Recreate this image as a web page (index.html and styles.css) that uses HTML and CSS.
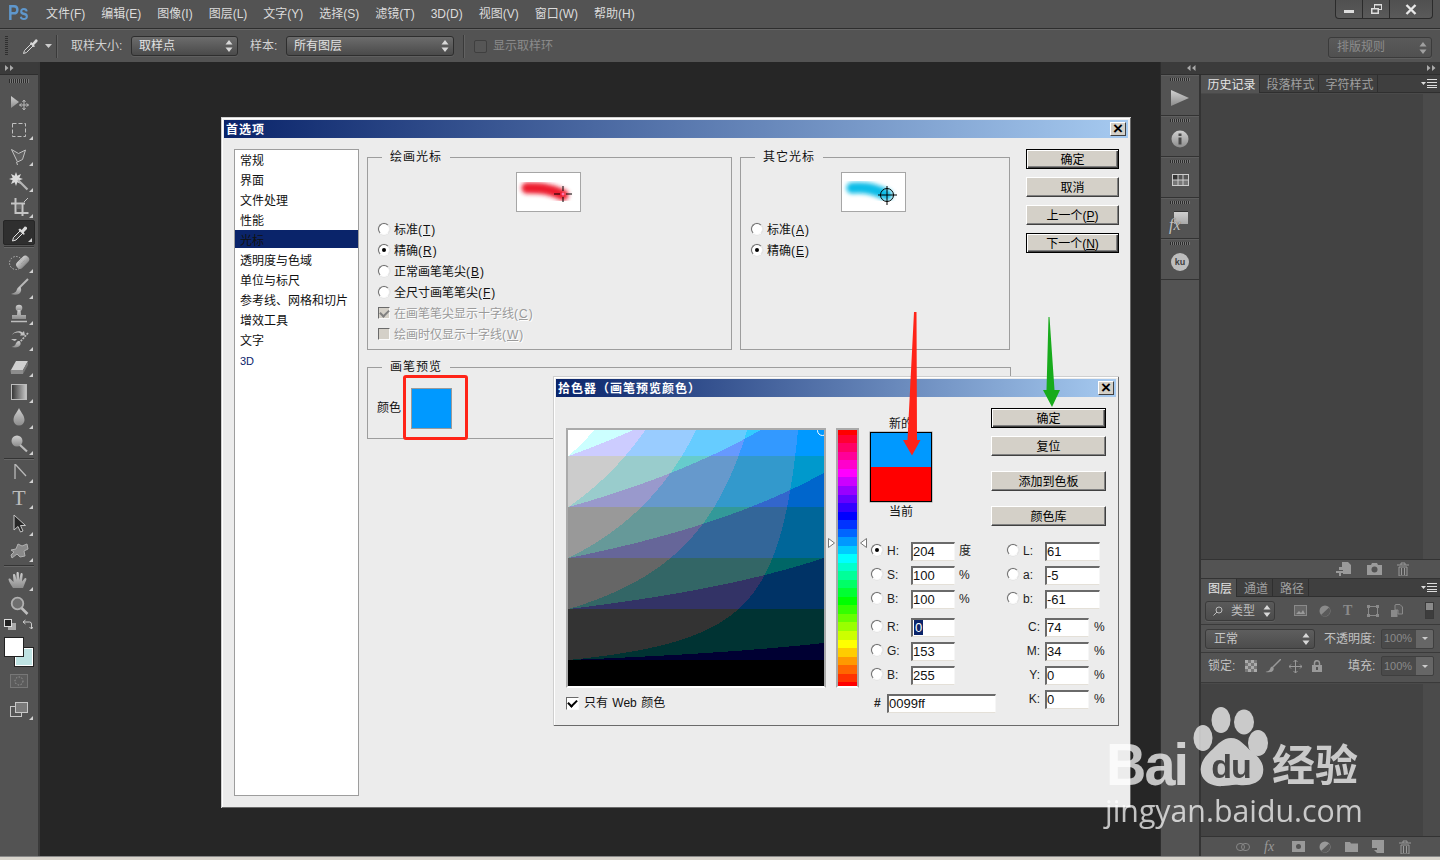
FILE: index.html
```html
<!DOCTYPE html>
<html lang="zh">
<head>
<meta charset="utf-8">
<title>Photoshop 首选项</title>
<link rel="stylesheet" href="styles.css">
</head>
<body>
<svg class="defs" width="0" height="0" aria-hidden="true">
  <defs>
    <linearGradient id="g" x1="0" y1="0" x2="0" y2="1"><stop offset="0" stop-color="#d0d0d0"/><stop offset="1" stop-color="#8c8c8c"/></linearGradient>
    <linearGradient id="gh" x1="0" y1="0" x2="1" y2="0"><stop offset="0" stop-color="#333"/><stop offset="1" stop-color="#c8c8c8"/></linearGradient>
    <filter id="soft" x="-30%" y="-80%" width="160%" height="260%"><feGaussianBlur stdDeviation="2"/></filter>
    <symbol id="updown" viewBox="0 0 8 12"><path d="M4 0l3.500 4.500h-7zM4 12L.5 7.500h7z" fill="currentColor"/></symbol>
    <symbol id="panelmenu" viewBox="0 0 16 9"><path d="M0 3h5L2.500 6z" fill="#ddd"/><path d="M6 .5h10M6 3.500h10M6 6.500h10M6 8.500h10" stroke="#ddd" stroke-width="1"/></symbol>
    <symbol id="trash" viewBox="0 0 14 14"><path d="M1 3h12M5 3V1h4v2M3 5h8v9H3zM5.500 6v7M8.500 6v7" stroke="#9a9a9a" fill="none"/></symbol>
    <symbol id="corner" viewBox="0 0 4 4"><path d="M4 0v4H0z" fill="#d0d0d0"/></symbol>
  </defs>
</svg>

<header class="menubar">
  <span class="ps-logo"><span class="ps-tx">Ps</span></span>
  <nav class="menu">
    <span>文件(F)</span><span>编辑(E)</span><span>图像(I)</span><span>图层(L)</span><span>文字(Y)</span><span>选择(S)</span><span>滤镜(T)</span><span>3D(D)</span><span>视图(V)</span><span>窗口(W)</span><span>帮助(H)</span>
  </nav>
  <div class="winctl">
    <span class="wc wc-min"><svg width="12" height="12" viewBox="0 0 12 12"><rect x="1" y="7" width="10" height="3" fill="#ddd"/></svg></span>
    <span class="wc wc-max"><svg width="13" height="12" viewBox="0 0 13 12"><path d="M4 1h8v6H9v4H1V5h3zM5 2.500V5h4v1h2V2.500zM2.500 6.500v3h5v-3z" fill="#ddd" fill-rule="evenodd"/></svg></span>
    <span class="wc wc-close"><svg width="12" height="11" viewBox="0 0 12 11"><path d="M1.500 1l9 9M10.500 1l-9 9" stroke="#e8e8e8" stroke-width="2.400"/></svg></span>
  </div>
</header>

<section class="optionsbar">
  <span class="grip"></span>
  <svg class="opt-tool" width="18" height="18" viewBox="0 0 18 18"><path d="M1.500 16.500l1-3 7-7 2 2-7 7z" fill="#555" stroke="#d8d8d8"/><path d="M9 5l1.500 1 3-3.500a1.500 1.500 0 012 2L12 8l1 1.500-1.500.5L8 6.500z" fill="#d8d8d8"/></svg>
  <svg class="opt-caret" width="7" height="4" viewBox="0 0 7 4"><path d="M0 0h7L3.500 4z" fill="#ccc"/></svg>
  <span class="vsep sep-a"></span>
  <span class="opt-label lbl-size">取样大小:</span>
  <span class="select sel-size"><span>取样点</span><svg class="ud" width="8" height="12"><use href="#updown"/></svg></span>
  <span class="opt-label lbl-sample">样本:</span>
  <span class="select sel-sample"><span>所有图层</span><svg class="ud" width="8" height="12"><use href="#updown"/></svg></span>
  <span class="vsep sep-b"></span>
  <span class="opt-check"></span>
  <span class="opt-label dim">显示取样环</span>
  <span class="select sel-rule"><span>排版规则</span><svg class="ud" width="8" height="12"><use href="#updown"/></svg></span>
</section>

<div class="workspace">
  <aside class="toolbar">
    <div class="strip"><svg width="9" height="6" viewBox="0 0 9 6"><path d="M0 0l3.500 3L0 6zM5 0l3.500 3L5 6z" fill="#aaa"/></svg></div>
    <span class="dots tool-dots"></span>

    <div class="tool"><svg width="24" height="24" viewBox="0 0 24 24"><path d="M4 5l8 6-8 6z" fill="url(#g)"/><path d="M17 9.500v9M12.500 14h9M15.500 11l1.500-2 1.500 2M15.500 17l1.500 2 1.500-2M14.500 12.500l-2 1.500 2 1.500M19.500 12.500l2 1.500-2 1.500" stroke="#b8b8b8" fill="none"/></svg></div>
    <div class="tool"><svg width="24" height="24" viewBox="0 0 24 24"><rect x="5.500" y="6.500" width="13" height="13" fill="none" stroke="#c0c0c0" stroke-dasharray="4 2"/></svg><svg class="cn" width="4" height="4"><use href="#corner"/></svg></div>
    <div class="tool"><svg width="24" height="24" viewBox="0 0 24 24"><path d="M4.500 6.500l7 4 7-3.500-3 9.500-5 2.500z" fill="#5f5f5f" stroke="#c0c0c0"/><path d="M9.500 19l1 3" stroke="#c0c0c0"/></svg><svg class="cn" width="4" height="4"><use href="#corner"/></svg></div>
    <div class="tool"><svg width="24" height="24" viewBox="0 0 24 24"><path d="M9 3l1.300 3.700L14 5l-1.700 3.700L16 10l-3.700 1.300L14 15l-3.700-1.700L9 17l-1.300-3.700L4 15l1.700-3.700L2 10l3.700-1.300L4 5l3.700 1.700z" fill="#dcdcdc"/><path d="M11 11l9.500 9.500" stroke="#b5b5b5" stroke-width="2.200"/></svg><svg class="cn" width="4" height="4"><use href="#corner"/></svg></div>
    <div class="tool"><svg width="24" height="24" viewBox="0 0 24 24"><path d="M4 8.500h14M8.500 3v15h13M15.500 8v13" stroke="#c4c4c4" stroke-width="2" fill="none"/><rect x="10" y="10" width="4" height="4" fill="#6a6a6a"/><path d="M17 7l4-4" stroke="#c4c4c4"/></svg><svg class="cn" width="4" height="4"><use href="#corner"/></svg></div>
    <div class="tool tool-on"><svg width="24" height="24" viewBox="0 0 24 24"><path d="M5.500 20l1-3.500 7.500-7.500 2.500 2.500-7.500 7.500z" fill="#3c3c3c" stroke="#e2e2e2"/><path d="M13 7.500l1.700 1.500 3-3.500a2 2 0 012.300 2.500L16.500 11.500 18 13l-1.500.7-5.200-5z" fill="#dcdcdc"/></svg><svg class="cn" width="4" height="4"><use href="#corner"/></svg></div>
    <div class="tb-sep wide"></div>
    <div class="tool"><svg width="24" height="24" viewBox="0 0 24 24"><circle cx="9" cy="13" r="6.500" fill="none" stroke="#b5b5b5" stroke-dasharray="1.500 1.500"/><rect x="8" y="8.500" width="15" height="7.500" rx="3.500" transform="rotate(-45 15.500 12)" fill="url(#g)"/><path d="M13 11l.1.1M15 13l.1.1M17 11l.1.1M15 9l.1.1" stroke="#555" stroke-width="1.500"/></svg><svg class="cn" width="4" height="4"><use href="#corner"/></svg></div>
    <div class="tool"><svg width="24" height="24" viewBox="0 0 24 24"><path d="M21 3l-9 9" stroke="#b8b8b8" stroke-width="2"/><path d="M13 11c-3 0-3 3-4 4.500-1 1.300-3 2-5 2.500 4 1.500 9 1 10-3 .5-1.500 0-3-1-4z" fill="url(#g)"/></svg><svg class="cn" width="4" height="4"><use href="#corner"/></svg></div>
    <div class="tool"><svg width="24" height="24" viewBox="0 0 24 24"><circle cx="12" cy="6" r="3.300" fill="url(#g)"/><path d="M10.500 8h3l.5 5h5v4H5v-4h5z" fill="url(#g)"/><path d="M4 19.500h16" stroke="#bdbdbd" stroke-width="1.500"/></svg><svg class="cn" width="4" height="4"><use href="#corner"/></svg></div>
    <div class="tool"><svg width="24" height="24" viewBox="0 0 24 24"><path d="M21 5l-8 9" stroke="#bbb" stroke-width="1.800" stroke-dasharray="2 1"/><path d="M12 13c-2 0-3 2-3.500 3.500-.5 1-2 2-4 2.500 4 1 8 .5 9-2.500.5-1.500-.5-3.500-1.500-3.500z" fill="url(#g)"/><path d="M5 7c3-3 7-3 9-1l-1 1.500 5 0-1-4.500-1.500 1.500C13 2.500 7 3 5 7zM4 11h6l-2 2-1.500-.5z" fill="#c0c0c0"/></svg><svg class="cn" width="4" height="4"><use href="#corner"/></svg></div>
    <div class="tool"><svg width="24" height="24" viewBox="0 0 24 24"><path d="M4 16l5-9h12l-5 9z" fill="#d0d0d0"/><path d="M3.500 16H16v4H4z" fill="#8c8c8c"/><path d="M16 16l5-9v4l-5 9z" fill="#777"/></svg><svg class="cn" width="4" height="4"><use href="#corner"/></svg></div>
    <div class="tool"><svg width="24" height="24" viewBox="0 0 24 24"><rect x="4.500" y="4.500" width="15" height="15" fill="url(#gh)" stroke="#bcbcbc"/></svg><svg class="cn" width="4" height="4"><use href="#corner"/></svg></div>
    <div class="tool"><svg width="24" height="24" viewBox="0 0 24 24"><path d="M12 2c1.500 4 5.500 7 5.500 12a5.500 5.500 0 01-11 0C6.500 9 10.500 6 12 2z" fill="url(#g)"/></svg><svg class="cn" width="4" height="4"><use href="#corner"/></svg></div>
    <div class="tool"><svg width="24" height="24" viewBox="0 0 24 24"><circle cx="10" cy="9" r="5.500" fill="url(#g)"/><path d="M13 13l7 6.500" stroke="#bbb" stroke-width="2.200"/></svg><svg class="cn" width="4" height="4"><use href="#corner"/></svg></div>
    <div class="tb-sep"></div>
    <div class="tool"><svg width="24" height="24" viewBox="0 0 24 24"><path d="M8 4v15M8.500 4.500L19 16" stroke="#b8b8b8" stroke-width="1.300" fill="none"/></svg><svg class="cn" width="4" height="4"><use href="#corner"/></svg></div>
    <div class="tool"><span class="tool-t">T</span><svg class="cn" width="4" height="4"><use href="#corner"/></svg></div>
    <div class="tool"><svg width="24" height="24" viewBox="0 0 24 24"><path d="M7 3v15l4-3.500 2.500 5.500 2.500-1-2.500-5.500h5z" fill="#262626" stroke="#c4c4c4"/></svg><svg class="cn" width="4" height="4"><use href="#corner"/></svg></div>
    <div class="tool"><svg width="24" height="24" viewBox="0 0 24 24"><path d="M4 11l5-1 2-5 4 2 5-2 1 5-4 2 1 5-5 1-3-3-5 4-1-3 3-3z" fill="#8a8a8a" stroke="#b0b0b0"/></svg><svg class="cn" width="4" height="4"><use href="#corner"/></svg></div>
    <div class="tb-sep wide"></div>
    <div class="tool"><svg width="24" height="24" viewBox="0 0 24 24"><path d="M6 20c-2-3-4-6-4.500-8.500 0-1 1.500-1.500 2.500 0L6.500 14 6 7c0-1.500 2-1.500 2.300 0L9.500 12V5c0-1.500 2.300-1.500 2.300 0l.4 7 1.300-6c.4-1.500 2.300-1 2.200.5l-.7 7 2.500-3c1-1 2.500 0 1.800 1.200L16 20z" fill="url(#g)"/></svg><svg class="cn" width="4" height="4"><use href="#corner"/></svg></div>
    <div class="tool"><svg width="24" height="24" viewBox="0 0 24 24"><circle cx="10.500" cy="9.500" r="5.800" fill="#6f6f6f" stroke="#b0b0b0" stroke-width="1.800"/><path d="M14.500 14l6 6" stroke="#bdbdbd" stroke-width="2.600"/></svg></div>

    <div class="color-mini">
      <svg width="12" height="11" viewBox="0 0 12 11"><rect x="4" y="4" width="8" height="7" fill="#aaa"/><rect x=".5" y=".5" width="7" height="7" fill="#222" stroke="#ddd"/></svg>
      <svg width="11" height="11" viewBox="0 0 11 11"><path d="M1 3h6.500a2 2 0 012 2v5M1 3l2.500-2M1 3l2.500 2M9.500 10l-2-2M9.500 10l1.500-2" fill="none" stroke="#ccc"/></svg>
    </div>
    <div class="swatches"><span class="sw-bg"></span><span class="sw-fg"></span></div>
    <div class="small-tool qm"><svg width="18" height="14" viewBox="0 0 18 14"><rect x=".5" y=".5" width="17" height="13" fill="#5c5c5c" stroke="#777"/><circle cx="9" cy="7" r="4" fill="none" stroke="#9a9a9a" stroke-dasharray="1.500 1.500"/></svg></div>
    <div class="small-tool sm"><svg width="18" height="15" viewBox="0 0 18 15"><rect x=".5" y="4.500" width="11" height="10" fill="#555" stroke="#c8c8c8"/><rect x="5.500" y=".5" width="12" height="10" fill="#7a7a7a" stroke="#c8c8c8"/></svg><svg class="cn" width="4" height="4"><use href="#corner"/></svg></div>
  </aside>

  <main class="canvas">
    <section class="dlg prefs">
      <div class="titlebar"><span class="tt">首选项</span><span class="xbtn">×</span></div>
      <div class="prefs-body">
        <ul class="cat-list">
          <li>常规</li><li>界面</li><li>文件处理</li><li>性能</li><li class="sel">光标</li><li>透明度与色域</li><li>单位与标尺</li><li>参考线、网格和切片</li><li>增效工具</li><li>文字</li><li class="blue3d">3D</li>
        </ul>
        <div class="prefs-main">
          <div class="fs-row">
            <div class="fs fs-paint">
              <span class="legend">绘画光标</span>
              <div class="cursor-prev cp-a"><svg width="63" height="38" viewBox="0 0 63 38"><path d="M10 15c12 0 22 0 36 7" fill="none" stroke="#ed1c2e" stroke-width="11" stroke-linecap="round" filter="url(#soft)"/><path d="M37 21h6M49 21h6M46 13v5M46 24v5" stroke="#000" stroke-width="1"/><circle cx="46" cy="21" r="1.500" fill="#f7a"/></svg></div>
              <div class="opts">
                <label class="opt"><i class="radio"></i>标准(<u>T</u>)</label>
                <label class="opt"><i class="radio on"></i>精确(<u>R</u>)</label>
                <label class="opt"><i class="radio"></i>正常画笔笔尖(<u>B</u>)</label>
                <label class="opt"><i class="radio"></i>全尺寸画笔笔尖(<u>F</u>)</label>
                <label class="opt off"><i class="check ck-dis on"></i>在画笔笔尖显示十字线(<u>C</u>)</label>
                <label class="opt off"><i class="check ck-dis"></i>绘画时仅显示十字线(<u>W</u>)</label>
              </div>
            </div>
            <div class="fs fs-other">
              <span class="legend">其它光标</span>
              <div class="cursor-prev cp-b"><svg width="63" height="38" viewBox="0 0 63 38"><path d="M10 15c12-1 20 0 35 7" fill="none" stroke="#10bde8" stroke-width="11" stroke-linecap="round" filter="url(#soft)"/><circle cx="45" cy="22" r="6.500" fill="none" stroke="#000"/><path d="M36 22h19M45 13v19" stroke="#000"/></svg></div>
              <div class="opts">
                <label class="opt"><i class="radio"></i>标准(<u>A</u>)</label>
                <label class="opt"><i class="radio on"></i>精确(<u>E</u>)</label>
              </div>
            </div>
          </div>
          <div class="fs fs-brush">
            <span class="legend">画笔预览</span>
            <span class="color-lbl">颜色</span>
            <span class="color-box"></span>
          </div>
        </div>
        <div class="btn-col">
          <span class="btn def">确定</span>
          <span class="btn">取消</span>
          <span class="btn">上一个(<u>P</u>)</span>
          <span class="btn def">下一个(<u>N</u>)</span>
        </div>
      </div>
    </section>

    <span class="note-box"></span>

    <section class="dlg picker">
      <div class="titlebar"><span class="tt">拾色器（画笔预览颜色）</span><span class="xbtn">×</span></div>
      <div class="picker-body">
        <div class="pick-left">
          <div class="field-box"><canvas id="field" width="256" height="256"></canvas><span class="marker"></span></div>
          <label class="web"><i class="check on"></i>只有 Web 颜色</label>
        </div>
        <div class="hue-box">
          <canvas id="hue" width="19" height="256"></canvas>
          <svg class="hue-arrow ha-l" width="8" height="10" viewBox="0 0 8 10"><path d="M.5.500v9l6-4.500z" fill="#fff" stroke="#777"/></svg>
          <svg class="hue-arrow ha-r" width="8" height="10" viewBox="0 0 8 10"><path d="M7.500.500v9l-6-4.500z" fill="#fff" stroke="#777"/></svg>
        </div>
        <div class="pick-right">
          <div class="pick-top">
            <div class="swatch-col">
              <span class="sw-lbl sw-new">新的</span>
              <div class="swatch"><span class="sw-n"></span><span class="sw-c"></span></div>
              <span class="sw-lbl sw-cur">当前</span>
            </div>
            <div class="pick-btns">
              <span class="btn def">确定</span>
              <span class="btn">复位</span>
              <span class="btn gap">添加到色板</span>
              <span class="btn gap">颜色库</span>
            </div>
          </div>
          <div class="vals">
            <div class="val-col">
              <div class="vrow"><i class="radio on"></i><span>H:</span><span class="inp">204</span><span class="suf">度</span></div>
              <div class="vrow"><i class="radio"></i><span>S:</span><span class="inp">100</span><span class="suf">%</span></div>
              <div class="vrow"><i class="radio"></i><span>B:</span><span class="inp">100</span><span class="suf">%</span></div>
              <div class="vrow grp"><i class="radio"></i><span>R:</span><span class="inp"><b class="selected">0</b></span></div>
              <div class="vrow"><i class="radio"></i><span>G:</span><span class="inp">153</span></div>
              <div class="vrow"><i class="radio"></i><span>B:</span><span class="inp">255</span></div>
              <div class="hexrow"><span class="hash">#</span><span class="inp">0099ff</span></div>
            </div>
            <div class="val-col">
              <div class="vrow lab"><i class="radio"></i><span>L:</span><span class="inp">61</span></div>
              <div class="vrow lab"><i class="radio"></i><span>a:</span><span class="inp">-5</span></div>
              <div class="vrow lab"><i class="radio"></i><span>b:</span><span class="inp">-61</span></div>
              <div class="vrow cmyk grp"><span class="rl">C:</span><span class="inp">74</span><span class="suf">%</span></div>
              <div class="vrow cmyk"><span class="rl">M:</span><span class="inp">34</span><span class="suf">%</span></div>
              <div class="vrow cmyk"><span class="rl">Y:</span><span class="inp">0</span><span class="suf">%</span></div>
              <div class="vrow cmyk"><span class="rl">K:</span><span class="inp">0</span><span class="suf">%</span></div>
            </div>
          </div>
        </div>
      </div>
    </section>

    <svg class="arrows" viewBox="40 62 1120 794" width="1120" height="794">
      <path d="M914 312l2.500 0 .5 128h3.500l-8.500 15.500-9-15.500h4.500z" fill="#ff2418"/>
      <path d="M1048.500 317h1l5 73h5.500l-8 17-9-17h3.500z" fill="#18ab1c"/>
    </svg>
  </main>

  <div class="rightcol">
    <div class="strip strip-r">
      <svg class="arrow-ll" width="9" height="6" viewBox="0 0 9 6"><path d="M3.500 0L0 3l3.500 3zM8.500 0L5 3l3.500 3z" fill="#aaa"/></svg>
      <svg class="arrow-rr" width="9" height="6" viewBox="0 0 9 6"><path d="M0 0l3.500 3L0 6zM5 0l3.500 3L5 6z" fill="#aaa"/></svg>
    </div>
    <div class="dock-row">
      <aside class="dock">
        <div class="dock-item"><span class="dots"></span><svg width="18" height="16" viewBox="0 0 18 16"><path d="M0 0l18 8-18 8z" fill="url(#g)"/></svg></div>
        <div class="dock-item"><span class="dots"></span><svg width="18" height="18" viewBox="0 0 18 18"><circle cx="9" cy="9" r="8.500" fill="url(#g)"/><rect x="7.500" y="7.500" width="3" height="7" fill="#4a4a4a"/><rect x="7.500" y="3.500" width="3" height="2.500" fill="#4a4a4a"/></svg></div>
        <div class="dock-item"><span class="dots"></span><svg width="17" height="12" viewBox="0 0 17 12"><rect width="17" height="12" fill="#ccc"/><path d="M1 1h4.500v4.500H1z" fill="#333"/><path d="M6.500 1h4v4.500h-4zM11.500 1H16v4.500h-4.500z" fill="#555"/><path d="M1 6.500h4.500V11H1zM6.500 6.500h4V11h-4zM11.500 6.500H16V11h-4.500z" fill="#777"/></svg></div>
        <div class="dock-item"><span class="dots"></span><span class="fx-icon"><span class="fx-sq"></span><span class="fx-tx">fx</span></span></div>
        <div class="dock-item"><span class="dots"></span><span class="ku">ku</span></div>
      </aside>
      <div class="panels">
        <section class="panel history">
          <div class="tabs">
            <span class="tab on">历史记录</span><span class="tab">段落样式</span><span class="tab">字符样式</span>
            <svg class="pm" width="16" height="9"><use href="#panelmenu"/></svg>
          </div>
          <div class="plist"><span class="track"></span></div>
          <div class="pbar pbar-h">
            <svg width="16" height="14" viewBox="0 0 16 14"><path d="M6 0h6l3 3v9H7V8H3V5h3z M2 9h5v2H5v3H3v-3H0V9z" fill="#9a9a9a"/></svg>
            <svg width="15" height="12" viewBox="0 0 15 12"><path d="M0 2h4l1-2h5l1 2h4v10H0z" fill="#9a9a9a"/><circle cx="7.500" cy="6.500" r="3" fill="#535353"/></svg>
            <svg width="14" height="14"><use href="#trash"/></svg>
            <span class="resizer"></span>
          </div>
        </section>
        <section class="panel layers">
          <div class="tabs">
            <span class="tab on t-s">图层</span><span class="tab t-s">通道</span><span class="tab t-s">路径</span>
            <svg class="pm" width="16" height="9"><use href="#panelmenu"/></svg>
          </div>
          <div class="lrow lrow-filter">
            <span class="select sel-filter"><svg width="10" height="10" viewBox="0 0 10 10"><circle cx="6" cy="4" r="3" fill="none" stroke="#bbb"/><path d="M4 6L.5 9.500" stroke="#bbb"/></svg><span>类型</span><svg class="ud" width="8" height="12"><use href="#updown"/></svg></span>
            <span class="filter-icons">
              <svg width="13" height="11" viewBox="0 0 13 11"><rect x=".5" y=".5" width="12" height="10" fill="#666" stroke="#8a8a8a"/><path d="M2 9l3-3 2 2 2-3 2 4z" fill="#9a9a9a"/></svg>
              <svg width="12" height="12" viewBox="0 0 12 12"><circle cx="6" cy="6" r="5.500" fill="#8a8a8a"/><path d="M10 2.500A5.500 5.500 0 012 10z" fill="#5a5a5a"/></svg>
              <span class="ftext">T</span>
              <svg width="12" height="12" viewBox="0 0 12 12"><rect x="1.500" y="1.500" width="9" height="9" fill="none" stroke="#8a8a8a"/><path d="M0 0h3v3H0zM9 0h3v3H9zM0 9h3v3H0zM9 9h3v3H9z" fill="#8a8a8a"/></svg>
              <svg width="12" height="13" viewBox="0 0 12 13"><path d="M5 .500h4l2.500 2.500v7H7V6H4V1z" fill="#5a5a5a" stroke="#8a8a8a"/><rect y="6" width="6.500" height="7" fill="#8a8a8a"/></svg>
            </span>
            <span class="toggle"></span>
          </div>
          <div class="lrow lrow-blend">
            <span class="select sel-blend"><span>正常</span><svg class="ud" width="8" height="12"><use href="#updown"/></svg></span>
            <span class="lbl lbl-op">不透明度:</span>
            <span class="pct"><span>100%</span><svg width="6" height="3" viewBox="0 0 6 3"><path d="M0 0h6L3 3z" fill="#ccc"/></svg></span>
          </div>
          <div class="lrow lrow-lock">
            <span class="lbl lbl-lock">锁定:</span>
            <svg class="lk" width="12" height="12" viewBox="0 0 12 12"><rect width="12" height="12" fill="#777"/><path d="M0 0h3v3H0zM6 0h3v3H6zM3 3h3v3H3zM9 3h3v3H9zM0 6h3v3H0zM6 6h3v3H6zM3 9h3v3H3zM9 9h3v3H9z" fill="#aaa"/></svg>
            <svg class="lk" width="16" height="14" viewBox="0 0 16 14"><path d="M16 0L8 8" stroke="#999" stroke-width="1.500"/><path d="M7.500 7.500c-2 0-2 2-3 3.500-1 1-2.500 1.500-4 2 3 .5 7 .5 8-2 .5-1.500 0-3-1-3.500z" fill="#999"/></svg>
            <svg class="lk lk-wide" width="13" height="13" viewBox="0 0 13 13"><path d="M6.500 0v13M0 6.500h13M4.500 2l2-2 2 2M4.500 11l2 2 2-2M2 4.500l-2 2 2 2M11 4.500l2 2-2 2" fill="none" stroke="#999"/></svg>
            <svg class="lk" width="10" height="12" viewBox="0 0 10 12"><path d="M2.500 5V3.200a2.500 2.500 0 015 0V5" fill="none" stroke="#999" stroke-width="1.500"/><rect y="5" width="10" height="7" fill="#999"/><rect x="4" y="7" width="2" height="3" fill="#535353"/></svg>
            <span class="lbl lbl-fill">填充:</span>
            <span class="pct"><span>100%</span><svg width="6" height="3" viewBox="0 0 6 3"><path d="M0 0h6L3 3z" fill="#ccc"/></svg></span>
          </div>
          <div class="plist plist-l"><span class="track"></span></div>
          <div class="pbar pbar-l">
            <svg width="14" height="8" viewBox="0 0 14 8"><rect x=".5" y=".5" width="8" height="7" rx="3.500" fill="none" stroke="#888"/><rect x="5.500" y=".5" width="8" height="7" rx="3.500" fill="none" stroke="#888"/></svg>
            <span class="fx-small">fx</span>
            <svg width="13" height="11" viewBox="0 0 13 11"><rect width="13" height="11" fill="#999"/><circle cx="6.500" cy="5.500" r="2.500" fill="#535353"/></svg>
            <svg width="12" height="12" viewBox="0 0 12 12"><circle cx="6" cy="6" r="5.500" fill="#999"/><path d="M10 2.500A5.500 5.500 0 012 10z" fill="#5a5a5a"/></svg>
            <svg width="13" height="11" viewBox="0 0 13 11"><path d="M0 1h5l1 1.500h7V11H0z" fill="#999"/></svg>
            <svg width="12" height="13" viewBox="0 0 12 13"><path d="M0 0h12v13H5v-5H0z" fill="#999"/><path d="M2 10l3 3v-3z" fill="#999"/></svg>
            <svg width="14" height="14"><use href="#trash"/></svg>
          </div>
        </section>
      </div>
    </div>
  </div>
</div>
<footer class="foot"></footer>

<div class="watermark">
  <span class="wm-bai">Bai</span>
  <svg class="wm-paw" width="76" height="84" viewBox="0 0 76 84">
    <ellipse cx="28" cy="13" rx="9.500" ry="13" fill="#fff"/>
    <ellipse cx="51" cy="15" rx="10" ry="12.500" fill="#fff"/>
    <ellipse cx="10" cy="31" rx="9.500" ry="13" fill="#fff"/>
    <ellipse cx="65" cy="36" rx="10" ry="13" fill="#fff"/>
    <path d="M38 31c-8 0-13 6-18 11-7 6-14 14-12 24 2 10 13 14 22 13 5 0 10-2 16-1 9 1 22-1 24-12 2-10-5-17-12-22-6-5-11-13-20-13z" fill="#fff"/>
    <text x="38" y="71" class="wm-du">du</text>
  </svg>
  <span class="wm-jy">经验</span>
  <span class="wm-url">jingyan.baidu.com</span>
</div>
<script src="picker.js"></script>
</body>
</html>
```

FILE: styles.css
```css
* { box-sizing: border-box; }
html, body { margin: 0; height: 100%; }
body {
  width: 1440px; height: 860px; overflow: hidden; position: relative;
  display: flex; flex-direction: column; white-space: nowrap;
  background: #535353; color: #d6d6d6;
  font: 12px/1.2 "Liberation Sans", "Noto Sans CJK SC", sans-serif;
}
.defs { position: absolute; }
svg { display: block; flex: none; }

/* Menu bar */
.menubar {
  height: 29px; flex: none; display: flex; align-items: flex-start;
  background: #535353; border-bottom: 1px solid #2e2e2e; position: relative;
}
.ps-logo { width: 46px; padding: 1px 0 0 8px; font: bold 22px/24px "Liberation Sans", sans-serif; color: #5f97cc; flex: none; }
.ps-tx { display: inline-block; transform: scaleX(.76); transform-origin: 0 50%; }
.menu { display: flex; gap: 16px; line-height: 28px; color: #dcdcdc; }
.winctl {
  margin-left: auto; margin-right: 7px; width: 98px; height: 19px; display: flex;
  border: 1px solid #2b2b2b; border-top: 0; border-radius: 0 0 4px 4px;
  background: linear-gradient(#505050, #5a5a5a);
}
.wc { display: flex; align-items: center; justify-content: center; border-right: 1px solid #2b2b2b; }
.wc-min { width: 27px; } .wc-max { width: 27px; } .wc-close { flex: 1; border-right: 0; }

/* Options bar */
.optionsbar {
  height: 33px; flex: none; display: flex; align-items: center;
  background: #535353; border-top: 1px solid #666; position: relative;
}
.grip {
  width: 3px; height: 20px; margin-left: 5px;
  background: repeating-linear-gradient(#2f2f2f 0 1px, transparent 1px 2px);
}
.opt-tool { margin-left: 14px; }
.opt-caret { margin-left: 5px; }
.vsep { width: 1px; height: 23px; background: #3a3a3a; box-shadow: 1px 0 #626262; }
.sep-a { margin-left: 4px; }
.opt-label { color: #d2d2d2; }
.lbl-size { margin-left: 14px; width: 60px; }
.lbl-sample { margin-left: 12px; width: 36px; }
.select {
  display: flex; align-items: center; height: 20px; padding: 0 4px 0 7px;
  border: 1px solid #2e2e2e; border-radius: 3px; color: #e2e2e2;
  background: linear-gradient(#6c6c6c, #4a4a4a); box-shadow: 0 1px #5f5f5f;
}
.select .ud { margin-left: auto; color: #d8d8d8; }
.sel-size { width: 107px; }
.sel-sample { width: 168px; }
.sep-b { margin-left: 9px; }
.opt-check {
  width: 13px; height: 13px; margin: 0 6px 0 10px; border: 1px solid #3f3f3f;
  border-radius: 2px; background: #565656;
}
.dim { color: #8b8b8b; }
.sel-rule {
  position: absolute; left: 1328px; top: 7px; width: 104px; height: 21px;
  color: #8c8c8c; background: linear-gradient(#5a5a5a, #505050); border-color: #3b3b3b;
  padding-left: 8px;
}
.sel-rule .ud { color: #a0a0a0; }

/* Workspace */
.workspace { flex: 1; display: flex; min-height: 0; }
.strip {
  height: 13px; flex: none; background: #3b3b3b; border-bottom: 1px solid #2e2e2e;
  display: flex; align-items: center;
}
.dots {
  display: block; height: 4px; width: 20px; flex: none;
  background: repeating-linear-gradient(90deg, #2c2c2c 0 1px, #777 1px 2px);
}

/* Toolbar */
.toolbar {
  width: 40px; flex: none; display: flex; flex-direction: column; align-items: stretch;
  background: #535353; border-right: 2px solid #3a3a3a;
}
.toolbar > .strip { padding-left: 5px; }
.tool-dots { margin: 4px 0 7px 9px; }
.tool { height: 26.100px; flex: none; position: relative; display: flex; align-items: center; justify-content: center; }
.tool .cn { position: absolute; right: 5px; bottom: 2px; }
.tool-on { background: #2f2f2f; border: 1px solid #262626; border-radius: 2px; margin: 0 3px; height: 25px; }
.tool-on .cn { right: 2px; bottom: 2px; }
.tb-sep { height: 1px; margin: 1px 4px 0; background: #343434; box-shadow: 0 1px #666; flex: none; }
.tb-sep.wide { margin-bottom: 1px; }
.tool-t { font: 22px/1 "Liberation Serif", serif; color: #bcbcbc; }
.color-mini { height: 14px; display: flex; justify-content: space-between; padding: 0 5px 0 4px; margin-top: 0; flex: none; }
.swatches { height: 32px; margin: 4px 0 0 4px; position: relative; flex: none; }
.sw-fg, .sw-bg { position: absolute; width: 20px; height: 20px; border: 1px solid #222; }
.sw-fg { left: 0; top: 0; background: #fff; }
.sw-bg { left: 10px; top: 10px; background: #bfe3e3; box-shadow: inset 0 0 0 1px #fff; }
.small-tool { position: relative; display: flex; justify-content: center; flex: none; }
.qm { margin: 5px 0 11px; }
.sm { padding-top: 3px; height: 24px; }
.small-tool .cn { position: absolute; right: 5px; bottom: 3px; }

/* Canvas */
.canvas { flex: 1; position: relative; background: #262626; min-width: 0; }

/* Dialogs */
.dlg {
  position: absolute; display: flex; flex-direction: column; background: #ececec;
  color: #111; border: 3px solid #ececec;
}
.dlg::after {
  content: ""; position: absolute; inset: -3px; pointer-events: none;
  box-shadow: inset 1px 1px #cfcfcf, inset -1px -1px #6a6a6a, inset 2px 2px #fff;
}
.prefs { left: 181px; top: 55px; width: 910px; height: 691px; }
.picker { left: 513px; top: 314px; width: 566px; height: 350px; }
.titlebar {
  height: 18px; flex: none; display: flex; align-items: center; justify-content: space-between;
  padding: 0 2px; font-weight: bold; color: #fff; font-size: 12px;
  background: linear-gradient(90deg, #0a246a, #a6caf0);
}
.tt { padding-top: 2px; letter-spacing: 1px; }
.xbtn {
  width: 16px; height: 14px; display: flex; align-items: center; justify-content: center;
  color: #000; background: #d4d0c8; font: bold 17px/14px "Liberation Sans", sans-serif;
  border: 1px solid; border-color: #fff #404040 #404040 #fff;
}

/* Preferences */
.prefs-body { flex: 1; display: flex; padding: 11px 0 0 10px; min-height: 0; }
.cat-list {
  width: 125px; height: 647px; flex: none; margin: 0; padding: 0; list-style: none;
  background: #fff; border: 1px solid #9d9d9d;
}
.cat-list li { height: 18px; margin-bottom: 2px; padding: 1px 0 0 5px; line-height: 20px; }
.cat-list .sel { background: #0a246a; color: #111; }
.cat-list .blue3d { color: #0a246a; font-size: 11px; }
.prefs-main { width: 644px; margin-left: 8px; padding-top: 8px; flex: none; }
.fs-row { display: flex; gap: 8px; margin-bottom: 17px; }
.fs { border: 1px solid #9d9d9d; position: relative; }
.legend {
  position: absolute; left: 14px; top: -9px; padding: 0 8px; background: #ececec;
  line-height: 16px; letter-spacing: 1px;
}
.fs-paint { width: 365px; height: 193px; }
.fs-other { width: 270px; height: 193px; }
.cursor-prev { width: 65px; height: 40px; margin-top: 14px; margin-bottom: 7px; background: #fff; border: 1px solid #a6a6a6; }
.cp-a { margin-left: 148px; }
.cp-b { margin-left: 100px; }
.opts { padding: 1px 0 0 10px; }
.opt { display: flex; align-items: center; height: 21px; }
.opt u { text-decoration: underline; margin: 0 1px; }
.radio {
  width: 12px; height: 12px; flex: none; border-radius: 50%; margin-right: 4px; margin-top: -3px;
  background: #fff; border: 1px solid; border-color: #6a6a6a #e8e8e8 #fafafa #6a6a6a;
  box-shadow: 0 0 0 .5px #ddd; position: relative; display: block;
}
.radio.on::after {
  content: ""; position: absolute; left: 3px; top: 3px; width: 4px; height: 4px;
  border-radius: 50%; background: #000;
}
.check {
  width: 12px; height: 12px; flex: none; margin-right: 4px; margin-top: -3px; display: block; position: relative;
  background: #fff; border: 1px solid; border-color: #6a6a6a #fafafa #fafafa #6a6a6a;
}
.check.on::after {
  content: ""; position: absolute; left: 1px; top: 0; width: 7px; height: 4px;
  border-left: 2px solid #000; border-bottom: 2px solid #000; transform: rotate(-45deg) translate(-1px, 1px);
}
.ck-dis { background: #d4d0c8; }
.ck-dis.on::after { border-color: #808080; }
.opt.off { color: #9a9a9a; text-shadow: 1px 1px #fff; }
.fs-brush { width: 644px; height: 72px; display: flex; align-items: center; padding: 10px 0 0 9px; }
.color-lbl { width: 34px; }
.color-box { width: 41px; height: 41px; background: #0099ff; border: 1px solid #9a9a9a; }
.btn-col { width: 93px; margin-left: 15px; display: flex; flex-direction: column; gap: 8px; flex: none; }
.btn {
  height: 20px; display: flex; align-items: center; justify-content: center; flex: none; padding-top: 2px;
  background: #d4d0c8; color: #000; border: 1px solid; border-color: #fff #404040 #404040 #fff;
  box-shadow: inset -1px -1px #808080;
}
.btn.def {
  border-color: #000; box-shadow: inset 1px 1px #fff, inset -1px -1px #404040, inset -2px -2px #808080;
}
.note-box {
  position: absolute; left: 363px; top: 313px; width: 65px; height: 65px;
  border: 3px solid #ff2418; border-radius: 3px;
}

/* Picker */
.picker-body { flex: 1; display: flex; padding: 11px 0 0 10px; min-height: 0; }
.pick-left { width: 260px; flex: none; padding-top: 20px; }
.field-box {
  width: 260px; height: 260px; position: relative; overflow: hidden;
  border: 2px solid; border-color: #aaa #aaa #fff #aaa;
}
.field-box canvas, .hue-box canvas { display: block; }
.marker {
  position: absolute; left: 249px; top: -5px; width: 11px; height: 11px;
  border: 1px solid #fff; border-radius: 50%;
}
.web { display: flex; align-items: center; height: 14px; margin-top: 8px; word-spacing: 1px; }
.web .check { margin: 0 5px 0 0; width: 13px; height: 13px; }
.hue-box {
  width: 23px; height: 260px; margin: 20px 0 0 10px; position: relative; flex: none;
  border: 2px solid; border-color: #aaa #aaa #fff #aaa;
}
.hue-arrow { position: absolute; top: 108px; }
.ha-l { left: -10px; }
.ha-r { right: -10px; }
.pick-right { margin-left: 11px; width: 246px; flex: none; }
.pick-top { display: flex; height: 131px; }
.swatch-col { width: 62px; flex: none; }
.sw-lbl { display: block; text-align: center; }
.sw-new { height: 24px; padding-top: 9px; line-height: 14px; }
.sw-cur { padding-top: 1px; line-height: 18px; }
.swatch { height: 70px; border: 1px solid #000; box-shadow: 0 0 0 .5px #999; display: flex; flex-direction: column; }
.sw-n { flex: 1; background: #0099ff; }
.sw-c { height: 34px; background: #f00; }
.pick-btns { width: 115px; margin-left: 59px; display: flex; flex-direction: column; gap: 8px; flex: none; }
.pick-btns .gap { margin-top: 7px; }
.vals { display: flex; padding-left: 1px; }
.val-col { width: 136px; flex: none; }
.vrow { display: grid; grid-template-columns: 16px 24px 44px auto; align-items: center; height: 24px; }
.vrow .radio { margin: -3px 0 0; }
.vrow .suf { margin-left: 4px; }
.vrow > span:not(.inp) { color: #222; }
.grp { margin-top: 4px; }
.inp {
  height: 19px; display: block; padding-left: 0; background: #fff; color: #111;
  font: 13px/16px "Liberation Sans", sans-serif; overflow: hidden;
  border: 1px solid; border-color: #6a6a6a #f6f6f6 #e4e0d8 #6a6a6a;
  border-width: 2px 1px 1px 2px;
}
.lab { grid-template-columns: 16px 22px 55px; }
.cmyk { grid-template-columns: 33px 44px auto; column-gap: 5px; }
.vrow.cmyk .suf { margin-left: 0; }
.rl { text-align: right; }
.selected { background: #0a246a; color: #fff; font-weight: normal; padding: 0 1px; display: inline-block; line-height: 15px; margin-left: 1px; }
.hexrow { display: grid; grid-template-columns: 16px 109px; align-items: center; height: 24px; margin-top: 4px; }
.hash { padding-left: 3px; color: #222; font-weight: bold; }

.arrows { position: absolute; left: 0; top: 0; pointer-events: none; }

/* Right side */
.rightcol { width: 280px; flex: none; display: flex; flex-direction: column; border-left: 1px solid #2e2e2e; }
.strip-r { justify-content: space-between; padding: 0 4px 0 26px; }
.dock-row { flex: 1; display: flex; min-height: 0; }
.dock { width: 40px; flex: none; border-right: 2px solid #333; background: #535353; }
.dock-item {
  height: 41px; display: flex; flex-direction: column; align-items: center;
  padding-top: 3px; border-bottom: 1px solid #333; box-shadow: inset 0 1px #5e5e5e;
}
.dock-item .dots { height: 3px; }
.dock-item > :not(.dots) { margin: auto; }
.fx-icon { width: 22px; height: 24px; position: relative; display: block; }
.fx-sq { position: absolute; left: 5px; top: 2px; width: 14px; height: 13px; background: linear-gradient(#333 0 1px, #cfcfcf 1px, #a8a8a8); }
.fx-tx { position: absolute; left: 0; top: 8px; font: italic 16px/16px "Liberation Serif", serif; color: #c2c2c2; text-shadow: 0 0 1px #444; }
.ku {
  width: 18px; height: 18px; border-radius: 50%; display: flex; align-items: center; justify-content: center;
  background: #bdbdbd; color: #3d3d3d; font: bold 9px/1 "Liberation Sans", sans-serif;
}
.panels { flex: 1; display: flex; flex-direction: column; min-width: 0; }
.panel { display: flex; flex-direction: column; }
.history { height: 504px; }
.layers { flex: 1; min-height: 0; }
.tabs {
  height: 18px; flex: none; display: flex; background: #3f3f3f; border-bottom: 1px solid #2f2f2f;
  position: relative;
}
.tab {
  width: 59px; display: flex; align-items: center; justify-content: center; padding: 2px 0 0 3px;
  color: #a0a0a0; border-right: 1px solid #2f2f2f; line-height: 16px;
}
.tab.on { background: #535353; color: #e4e4e4; height: 18px; }
.t-s { width: 36px; }
.pm { position: absolute; right: 3px; top: 4px; }
.plist { flex: 1; background: #434343; position: relative; min-height: 0; border-top: 1px solid #4a4a4a; }
.track { position: absolute; right: 0; top: 0; bottom: 0; width: 17px; background: #4b4b4b; }
.pbar {
  height: 19px; flex: none; display: flex; align-items: center; background: #535353; position: relative;
  border-top: 1px solid #333;
}
.pbar-h { padding-left: 135px; border-bottom: 1px solid #333; height: 20px; }
.pbar-h svg:nth-child(1) { margin-right: 15px; }
.pbar-h svg:nth-child(2) { margin-right: 14px; }
.resizer {
  position: absolute; right: 2px; bottom: 2px; width: 10px; height: 10px;
  background: radial-gradient(circle, #888 .6px, transparent .7px) 0 0 / 2px 2px;
  clip-path: polygon(100% 0, 100% 100%, 0 100%);
}
.pbar-l { padding-left: 35px; justify-content: flex-start; gap: 14px; height: 20px; }
.fx-small { font: italic 14px/14px "Liberation Serif", serif; color: #999; width: 14px; }
.lrow { display: flex; align-items: center; padding-left: 4px; background: #535353; border-bottom: 1px solid #3a3a3a; flex: none; }
.lrow-filter { height: 28px; }
.lrow-blend { height: 28px; }
.lrow-lock { height: 30px; padding-bottom: 3px; }
.sel-filter { width: 70px; padding-left: 7px; gap: 8px; background: linear-gradient(#5a5a5a, #4c4c4c); color: #bdbdbd; border-color: #3a3a3a; }
.sel-filter > span { padding-top: 1px; }
.filter-icons { display: flex; align-items: center; gap: 12px; margin-left: 19px; width: 120px; }
.ftext { font: bold 14px/1 "Liberation Serif", serif; color: #8a8a8a; width: 12px; }
.toggle { width: 9px; height: 17px; margin-left: 11px; background: linear-gradient(#8a8a8a 0 50%, #3d3d3d 50%); border: 1px solid #3a3a3a; }
.sel-blend { width: 110px; padding-left: 8px; color: #c8c8c8; background: linear-gradient(#5e5e5e, #4c4c4c); border-color: #3a3a3a; }
.sel-blend > span { padding-top: 1px; }
.lbl { color: #c2c2c2; }
.lbl-op { margin-left: 9px; width: 57px; padding-top: 1px; }
.pct {
  width: 53px; height: 20px; display: flex; align-items: center; justify-content: space-between;
  padding: 0 5px 0 2px; font: 11px/1 "Liberation Sans", sans-serif; color: #8a8a8a;
  border: 1px solid #3f3f3f; border-radius: 2px;
  background: linear-gradient(90deg, #4a4a4a 0 34px, #666 34px);
}
.lbl-lock { width: 37px; margin-left: 3px; }
.lk { margin-right: 8px; }
.lk-wide { margin-right: 10px; }
.lbl-fill { margin-left: 18px; width: 33px; }
.foot { height: 4px; flex: none; background: #d8d4cc; border-top: 1px solid #888; }

/* Watermark */
.watermark { position: absolute; left: 1100px; top: 700px; width: 280px; height: 140px; color: rgba(255,255,255,.72); }
.wm-bai { position: absolute; left: 6px; top: 41px; font: bold 60px/48px "Liberation Sans", sans-serif; letter-spacing: -2px; transform: scaleX(.93); transform-origin: 0 50%; }
.wm-paw { position: absolute; left: 93px; top: 7px; opacity: .72; }
.wm-du { font: bold 34px "Liberation Sans", sans-serif; fill: #4a4a4a; text-anchor: middle; letter-spacing: -1px; }
.wm-jy { position: absolute; left: 172px; top: 37px; font: bold 43px/50px "Noto Sans CJK SC", sans-serif; }
.wm-url { position: absolute; left: 5px; top: 93px; font: 30.300px/36px "Open Sans", sans-serif; }
```

FILE: picker.js
```js
function hsvToWebSafe(h, s, v) {
  var i = Math.floor(h / 60) % 6, f = h / 60 - Math.floor(h / 60);
  var p = v * (1 - s), q = v * (1 - f * s), t = v * (1 - (1 - f) * s);
  var rgb = [[v, t, p], [q, v, p], [p, v, t], [p, q, v], [t, p, v], [v, p, q]][i];
  return rgb.map(function (c) { return Math.round(c * 5) * 51; });
}
function paint(id, pixel) {
  var cv = document.getElementById(id), ctx = cv.getContext("2d");
  var img = ctx.createImageData(cv.width, cv.height);
  for (var y = 0; y < cv.height; y++) {
    for (var x = 0; x < cv.width; x++) {
      var c = pixel(x, y), k = (y * cv.width + x) * 4;
      img.data[k] = c[0]; img.data[k + 1] = c[1]; img.data[k + 2] = c[2]; img.data[k + 3] = 255;
    }
  }
  ctx.putImageData(img, 0, 0);
}
paint("field", function (x, y) { return hsvToWebSafe(204, x / 255, 1 - y / 255); });
paint("hue", function (x, y) { return hsvToWebSafe(360 * (1 - y / 256), 1, 1); });
```
